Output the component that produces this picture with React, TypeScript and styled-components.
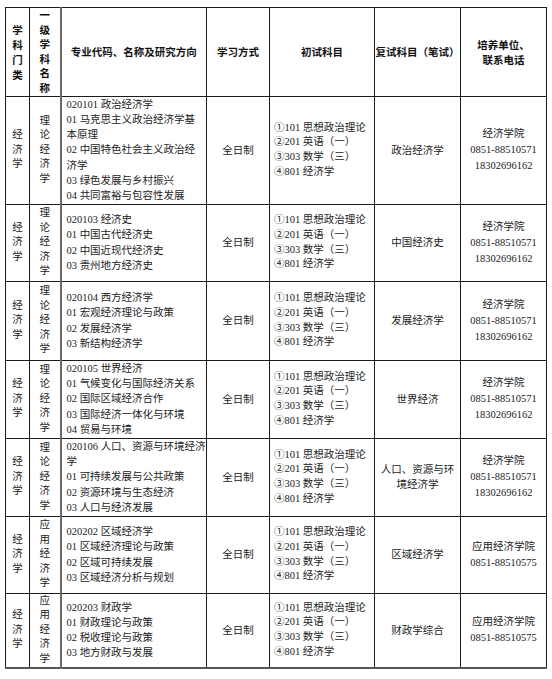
import React from "react";
import styled, { createGlobalStyle } from "styled-components";

const Global = createGlobalStyle`
  html, body { margin: 0; padding: 0; background: #fff; }
  body { font-family: "Liberation Serif", "Noto Sans CJK SC", serif; color: #222; }
`;

const Page = styled.div`
  padding: 7px 6px 0 5px;
`;

const Table = styled.table`
  border-collapse: collapse;
  table-layout: fixed;
  width: 541px;
  border-bottom: 2px solid #555;
`;

const Row = styled.tr<{ $h: number }>`
  height: ${(p) => p.$h}px;
`;

const Head = styled.th<{ $thick?: boolean; $lh?: number }>`
  border: 1px solid #1a1a1a;
  ${(p) => (p.$thick ? "border-right: 2px solid #6a6a6a;" : "")}
  padding: 0;
  vertical-align: middle;
  text-align: center;
  font-family: "Noto Sans CJK SC", sans-serif;
  font-weight: 700;
  font-size: 10.5px;
  line-height: ${(p) => p.$lh ?? 15}px;
  color: #111;
`;

const Cell = styled.td<{ $align?: "left" | "center"; $lh?: number; $pl?: number; $thick?: boolean }>`
  border: 1px solid #1a1a1a;
  ${(p) => (p.$thick ? "border-right: 2px solid #6a6a6a;" : "")}
  padding: 0 0 0 ${(p) => p.$pl ?? 0}px;
  vertical-align: middle;
  text-align: ${(p) => p.$align ?? "center"};
  font-size: 10.5px;
  line-height: ${(p) => p.$lh ?? 15}px;
  color: #222;
  overflow: hidden;
`;

const Line = styled.div`
  white-space: nowrap;
`;

const Stack = styled.div`
  display: flex;
  flex-direction: column;
  align-items: center;
`;

type Rec = {
  first: string;
  lines: string[];
  retest: string[];
  unit: string[];
  h: number;
};

const econUnit = ["经济学院", "0851-88510571", "18302696162"];
const appUnit = ["应用经济学院", "0851-88510575"];

const rows: Rec[] = [
  {
    first: "理论经济学",
    lines: [
      "020101 政治经济学",
      "01 马克思主义政治经济学基",
      "本原理",
      "02 中国特色社会主义政治经",
      "济学",
      "03 绿色发展与乡村振兴",
      "04 共同富裕与包容性发展",
    ],
    retest: ["政治经济学"],
    unit: econUnit,
    h: 108,
  },
  {
    first: "理论经济学",
    lines: ["020103 经济史", "01 中国古代经济史", "02 中国近现代经济史", "03 贵州地方经济史"],
    retest: ["中国经济史"],
    unit: econUnit,
    h: 77,
  },
  {
    first: "理论经济学",
    lines: ["020104 西方经济学", "01 宏观经济理论与政策", "02 发展经济学", "03 新结构经济学"],
    retest: ["发展经济学"],
    unit: econUnit,
    h: 79,
  },
  {
    first: "理论经济学",
    lines: [
      "020105 世界经济",
      "01 气候变化与国际经济关系",
      "02 国际区域经济合作",
      "03 国际经济一体化与环境",
      "04 贸易与环境",
    ],
    retest: ["世界经济"],
    unit: econUnit,
    h: 78,
  },
  {
    first: "理论经济学",
    lines: [
      "020106 人口、资源与环境经济",
      "学",
      "01 可持续发展与公共政策",
      "02 资源环境与生态经济",
      "03 人口与经济发展",
    ],
    retest: ["人口、资源与环", "境经济学"],
    unit: econUnit,
    h: 78,
  },
  {
    first: "应用经济学",
    lines: ["020202 区域经济学", "01 区域经济理论与政策", "02 区域可持续发展", "03 区域经济分析与规划"],
    retest: ["区域经济学"],
    unit: appUnit,
    h: 77,
  },
  {
    first: "应用经济学",
    lines: ["020203 财政学", "01 财政理论与政策", "02 税收理论与政策", "03 地方财政与发展"],
    retest: ["财政学综合"],
    unit: appUnit,
    h: 72,
  },
];

const exams = ["①101 思想政治理论", "②201 英语（一）", "③303 数学（三）", "④801 经济学"];

const Vertical = ({ text }: { text: string }) => (
  <Stack>
    {Array.from(text).map((c, i) => (
      <span key={i}>{c}</span>
    ))}
  </Stack>
);

export default function App() {
  return (
    <Page>
      <Global />
      <Table>
        <colgroup>
          <col style={{ width: 24 }} />
          <col style={{ width: 31 }} />
          <col style={{ width: 146 }} />
          <col style={{ width: 63 }} />
          <col style={{ width: 105 }} />
          <col style={{ width: 86 }} />
          <col style={{ width: 86 }} />
        </colgroup>
        <thead>
          <Row $h={88}>
            <Head>
              <Vertical text="学科门类" />
            </Head>
            <Head $thick $lh={14.6}>
              <Vertical text="一级学科名称" />
            </Head>
            <Head>专业代码、名称及研究方向</Head>
            <Head>学习方式</Head>
            <Head>初试科目</Head>
            <Head>复试科目（笔试）</Head>
            <Head>
              <Line>培养单位、</Line>
              <Line>联系电话</Line>
            </Head>
          </Row>
        </thead>
        <tbody>
          {rows.map((r, i) => (
            <Row key={i} $h={r.h}>
              <Cell $lh={14.5}>
                <Vertical text="经济学" />
              </Cell>
              <Cell $thick $lh={14.6}>
                <Vertical text={r.first} />
              </Cell>
              <Cell $align="left" $pl={5} $lh={15.2}>
                {r.lines.map((l, j) => (
                  <Line key={j}>{l}</Line>
                ))}
              </Cell>
              <Cell>全日制</Cell>
              <Cell $align="left" $pl={4} $lh={14.6}>
                {exams.map((l, j) => (
                  <Line key={j}>{l}</Line>
                ))}
              </Cell>
              <Cell $lh={15}>
                {r.retest.map((l, j) => (
                  <Line key={j}>{l}</Line>
                ))}
              </Cell>
              <Cell $lh={16}>
                {r.unit.map((l, j) => (
                  <Line key={j}>{l}</Line>
                ))}
              </Cell>
            </Row>
          ))}
        </tbody>
      </Table>
    </Page>
  );
}
